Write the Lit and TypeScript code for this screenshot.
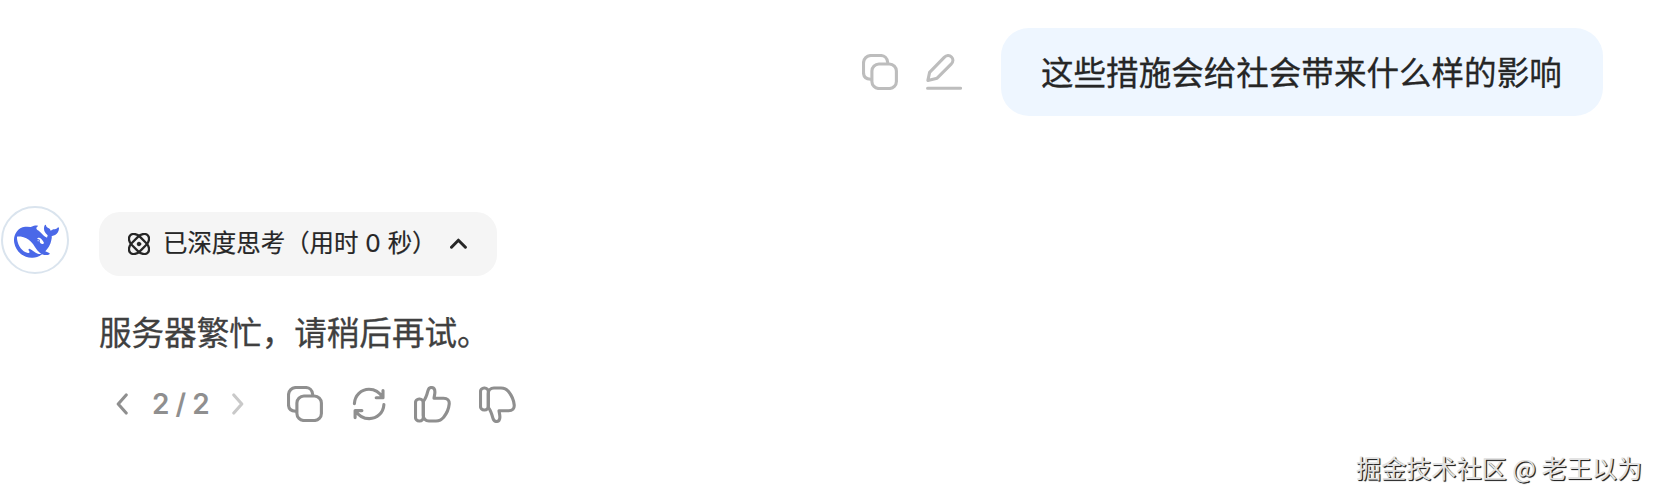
import { LitElement, html, css, svg } from "lit";
import { customElement, property } from "lit/decorators.js";

const icons: Record<string, { w: number; h: number; body: unknown }> = {
  copy: {
    w: 36, h: 36,
    body: svg`<path d="M8.6 25.3C4.4 25 1.5 22.6 1.5 18.5V9a7.5 7.5 0 0 1 7.5-7.5h9.5c4 0 6.8 2.6 7.1 6.6"/><rect x="9.9" y="10" width="24.5" height="24.5" rx="7"/>`,
  },
  edit: {
    w: 36, h: 36,
    body: svg`<path d="M1.9 26.4 3.6 18.4 18.2 3.4c2.2-2.2 5.3-2.4 7.3-.4s1.8 4.9-.4 7.2L11.1 24.2Z"/><path d="M1.6 34.3h33"/>`,
  },
  refresh: {
    w: 34, h: 36,
    body: svg`<path d="M2.4 17.6C2.8 9.4 9.2 3.2 17 3.2c5.8 0 10.6 3 13.6 8.3M31 4.6v7.2h-6.8"/><path d="M31.9 18.6C31.4 26.8 25 32.6 17.2 32.6 11.4 32.6 6.7 29.8 3.5 24.8M3.1 31.6V24.6H9.9"/>`,
  },
  up: {
    w: 37, h: 37,
    body: svg`<rect x="1.5" y="13" width="7.8" height="22" rx="3.6"/><path d="M9.3 15.5C11.6 12.6 12.9 8.8 13.9 4.8 14.5 2.5 15.6 1.5 17.3 1.5c2.3 0 3.6 1.7 3.6 4.5 0 2.2-.6 4.1-.9 6.2H29.5c4 0 6 2.3 5.7 5.8-.4 4.8-2.6 9.6-5.7 13.4-2 2.6-4.3 3.6-7.5 3.6H15c-3.5 0-5.7-2.2-5.7-5.7Z"/>`,
  },
  chevronUp: { w: 17, h: 11, body: svg`<path d="M1.5 9.2 8.4 2.2 15.4 9.2"/>` },
  chevronLeft: { w: 12, h: 22, body: svg`<path d="M10.2 2 2.2 11l8 9"/>` },
  chevronRight: { w: 12, h: 22, body: svg`<path d="m1.8 2 8 9-8 9"/>` },
  atom: {
    w: 22, h: 22,
    body: svg`<rect x="-1.3" y="5.2" width="24.6" height="11.600" rx="8" ry="5.800" transform="rotate(45 11 11)"/><rect x="-1.3" y="5.2" width="24.6" height="11.600" rx="8" ry="5.800" transform="rotate(-45 11 11)"/><circle cx="11" cy="11" r="1.800" fill="currentColor" stroke-width="1"/>`,
  },
};

@customElement("line-icon")
class LineIcon extends LitElement {
  @property() name = "copy";
  static styles = css`
    :host { display: block; flex: none; }
    svg {
      display: block; fill: none; stroke: currentColor;
      stroke-width: var(--stroke, 3.1); stroke-linecap: round; stroke-linejoin: round;
    }
  `;
  render() {
    const i = icons[this.name];
    return html`<svg width=${i.w} height=${i.h} viewBox="0 0 ${i.w} ${i.h}">${i.body}</svg>`;
  }
}

@customElement("app-root")
class AppRoot extends LitElement {
  static styles = css`
    :host {
      display: block; box-sizing: border-box; width: 1658px; height: 500px; overflow: hidden;
      background: #fff; position: relative;
      font-family: Inter, "Noto Sans CJK SC", sans-serif;
    }
    .question {
      display: flex; justify-content: flex-end; align-items: center;
      padding: 28px 55px 0 0;
    }
    .tools { display: flex; gap: 28px; margin-right: 39px; color: #bdbdbd; }
    .bubble {
      box-sizing: border-box; width: 602px; height: 88px; padding: 0 40px; border-radius: 28px;
      background: #eef6ff; color: #262626; font: 32.56px/85px "Noto Sans CJK SC", sans-serif;
      white-space: nowrap; -webkit-text-stroke: 0.3px currentColor;
    }
    .answer { display: flex; padding: 90px 0 0 1px; }
    .avatar {
      box-sizing: border-box; width: 68px; height: 68px; border: 2px solid #dae4ee; border-radius: 50%;
      display: grid; place-items: center; flex: none;
    }
    .avatar svg { display: block; fill: #4a68e8; margin: 2px 0 0 3px; }
    .content { margin-left: 30px; padding-top: 6px; }
    .think {
      box-sizing: border-box; display: flex; align-items: center; width: 398px; height: 64px;
      padding-left: 29px; border-radius: 21px; background: #f5f5f5; color: #262626;
      font: 24.45px/62px Inter, "Noto Sans CJK SC", sans-serif; white-space: pre;
    }
    .atom { --stroke: 2.3; }
    .think-text { width: 287px; height: 64px; margin-left: 13px; -webkit-text-stroke: 0.2px currentColor; }
    .caret { --stroke: 3; margin-top: -2px; }
    .reply {
      margin-top: 31px; color: #404040; font: 32.56px/48px "Noto Sans CJK SC", sans-serif;
      white-space: nowrap; -webkit-text-stroke: 0.3px currentColor;
    }
    .actions { display: flex; align-items: center; margin: 31px 0 0 17px; height: 36px; color: #8f8f8f; }
    .count { width: 56px; margin: 0 24px; font-size: 28px; font-weight: 600; line-height: 36px; white-space: nowrap; word-spacing: -1px; }
    .next { color: #c9c9c9; margin-right: 43px; }
    .buttons { display: flex; gap: 28.5px; }
    .down { transform: scaleY(-1); margin-left: -1px; }
    .watermark {
      position: absolute; right: 16px; bottom: 15px; color: #e2e2e2;
      font: 25.1px/36px "Noto Sans CJK SC", sans-serif; white-space: nowrap;
      text-shadow: 1px 1px 1px #222, 1px 1px 0 #444;
    }
  `;
  render() {
    return html`
      <div class="question">
        <div class="tools"><line-icon name="copy"></line-icon><line-icon name="edit"></line-icon></div>
        <div class="bubble">这些措施会给社会带来什么样的影响</div>
      </div>
      <div class="answer">
        <div class="avatar">
          <svg width="45" height="45" viewBox="0 0 24 24"><path fill-rule="evenodd" d="M23.748 4.482c-.254-.124-.364.113-.512.234-.051.039-.094.09-.137.136-.372.397-.806.657-1.373.626-.829-.046-1.537.214-2.163.848-.133-.782-.575-1.248-1.247-1.548-.352-.156-.708-.311-.955-.65-.172-.241-.219-.51-.305-.774-.055-.16-.11-.323-.293-.35-.2-.031-.278.136-.356.276-.313.572-.434 1.202-.422 1.84.027 1.436.633 2.58 1.838 3.393.137.093.172.187.129.323-.082.28-.18.552-.266.833-.055.179-.137.217-.329.14a5.526 5.526 0 01-1.736-1.18c-.857-.828-1.631-1.742-2.597-2.458a11.365 11.365 0 00-.689-.471c-.985-.957.13-1.743.388-1.836.27-.098.093-.432-.779-.428-.872.004-1.67.295-2.687.684a3.055 3.055 0 01-.465.137 9.597 9.597 0 00-2.883-.102c-1.885.21-3.39 1.102-4.497 2.623C.082 8.606-.231 10.684.152 12.85c.403 2.284 1.569 4.175 3.36 5.653 1.858 1.533 3.997 2.284 6.438 2.14 1.482-.085 3.133-.284 4.994-1.86.47.234.962.327 1.78.397.63.059 1.236-.03 1.705-.128.735-.156.684-.837.419-.961-2.155-1.004-1.682-.595-2.113-.926 1.096-1.296 2.746-2.642 3.392-7.003.05-.347.007-.565 0-.845-.004-.17.035-.237.23-.256a4.173 4.173 0 001.545-.475c1.396-.763 1.96-2.015 2.093-3.517.02-.23-.004-.467-.247-.588zM11.581 18c-2.089-1.642-3.102-2.183-3.52-2.16-.392.024-.321.471-.235.763.09.288.207.486.371.739.114.167.192.416-.113.603-.673.416-1.842-.14-1.897-.167-1.361-.802-2.5-1.86-3.301-3.307-.774-1.393-1.224-2.887-1.298-4.482-.02-.386.093-.522.477-.592a4.696 4.696 0 011.529-.039c2.132.312 3.946 1.265 5.468 2.774.868.86 1.525 1.887 2.202 2.891.72 1.066 1.494 2.082 2.48 2.914.348.292.625.514.891.677-.802.09-2.14.11-3.054-.614zm1-6.44a.306.306 0 01.415-.287.302.302 0 01.2.288.306.306 0 01-.31.307.303.303 0 01-.304-.308zm3.11 1.596c-.2.081-.399.151-.59.16a1.245 1.245 0 01-.798-.254c-.274-.23-.47-.358-.552-.758a1.73 1.73 0 01.016-.588c.07-.327-.008-.537-.239-.727-.187-.156-.426-.199-.688-.199a.559.559 0 01-.254-.078c-.11-.054-.2-.191-.114-.358.028-.054.16-.186.192-.21.356-.202.767-.136 1.146.016.352.144.618.408 1.001.782.391.451.462.576.685.914.176.265.336.537.445.848.067.195-.019.354-.25.452z"/></svg>
        </div>
        <div class="content">
          <div class="think">
            <line-icon class="atom" name="atom"></line-icon>
            <span class="think-text">已深度思考（用时 0 秒）</span>
            <line-icon class="caret" name="chevronUp"></line-icon>
          </div>
          <div class="reply">服务器繁忙，请稍后再试。</div>
          <div class="actions">
            <line-icon name="chevronLeft"></line-icon>
            <span class="count">2 / 2</span>
            <line-icon class="next" name="chevronRight"></line-icon>
            <div class="buttons">
              <line-icon name="copy"></line-icon>
              <line-icon name="refresh"></line-icon>
              <line-icon name="up"></line-icon>
              <line-icon class="down" name="up"></line-icon>
            </div>
          </div>
        </div>
      </div>
      <div class="watermark">掘金技术社区 @ 老王以为</div>
    `;
  }
}
